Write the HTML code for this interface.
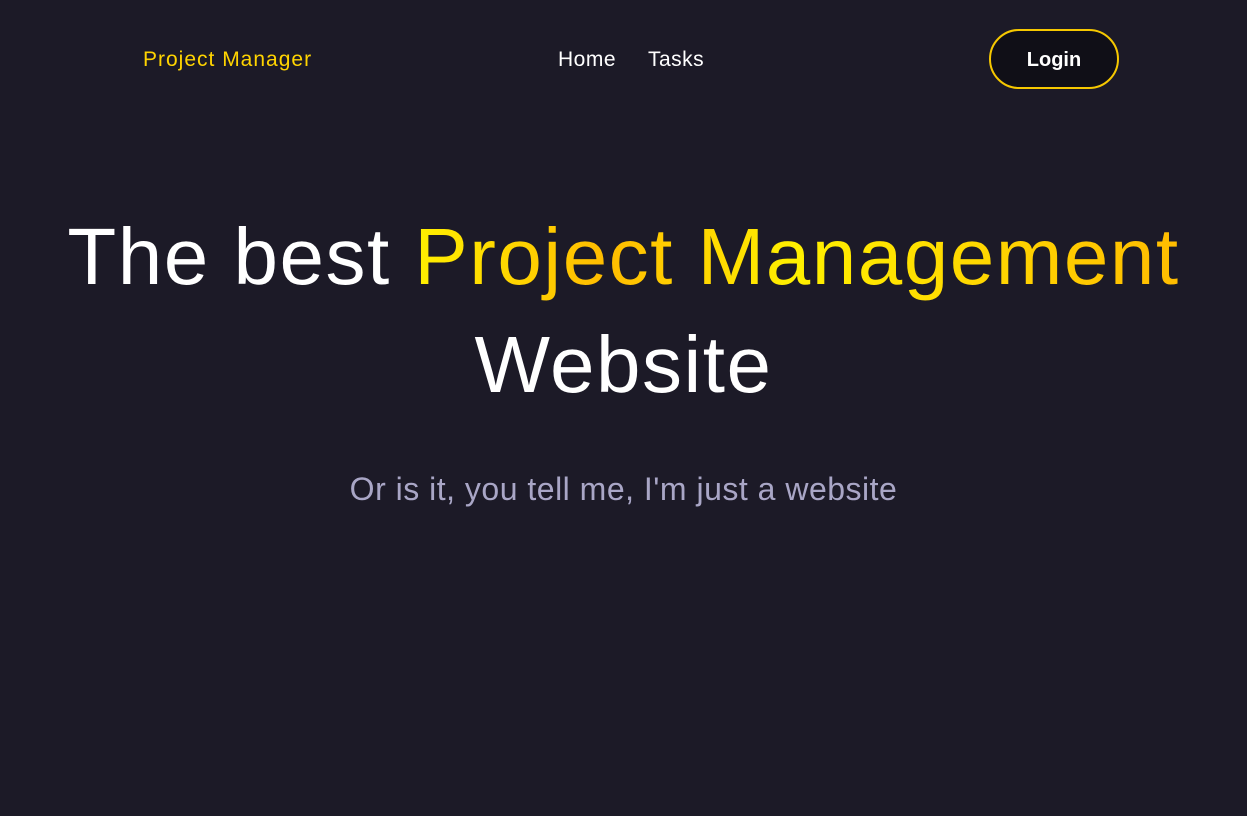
<!DOCTYPE html>
<html><head><meta charset="utf-8"><style>
*{margin:0;padding:0;box-sizing:border-box}
body{width:1247px;height:816px;background:#1c1a27;font-family:"Liberation Sans",sans-serif;position:relative;overflow:hidden}
.logo{position:absolute;left:143px;top:48px;font-size:21px;color:#ffd400;letter-spacing:1px}
.nav{position:absolute;top:48px;font-size:21px;color:#fff;letter-spacing:0.5px}
.btn{position:absolute;left:989px;top:29px;width:130px;height:60px;border-radius:30px;background:#100f17;border:2px solid #f6c800;color:#fff;font-weight:bold;font-size:20px;text-align:center;line-height:58px}
h1{position:absolute;left:0;right:0;top:203px;text-align:center;font-weight:normal;font-size:80px;line-height:108px;color:#fff;letter-spacing:1.5px}
.g{background:linear-gradient(90deg,#fff000 0%,#ffbc00 25%,#fff000 50%,#ffbc00 100%);-webkit-background-clip:text;background-clip:text;color:transparent}
p{position:absolute;left:0;right:0;top:471px;text-align:center;font-size:32px;color:#a9a6c6;letter-spacing:0.5px}
</style></head><body>
<div class="logo">Project Manager</div>
<div class="nav" style="left:558px">Home</div>
<div class="nav" style="left:648px">Tasks</div>
<div class="btn">Login</div>
<h1>The best <span class="g">Project Management</span><br>Website</h1>
<p>Or is it, you tell me, I'm just a website</p>
</body></html>
